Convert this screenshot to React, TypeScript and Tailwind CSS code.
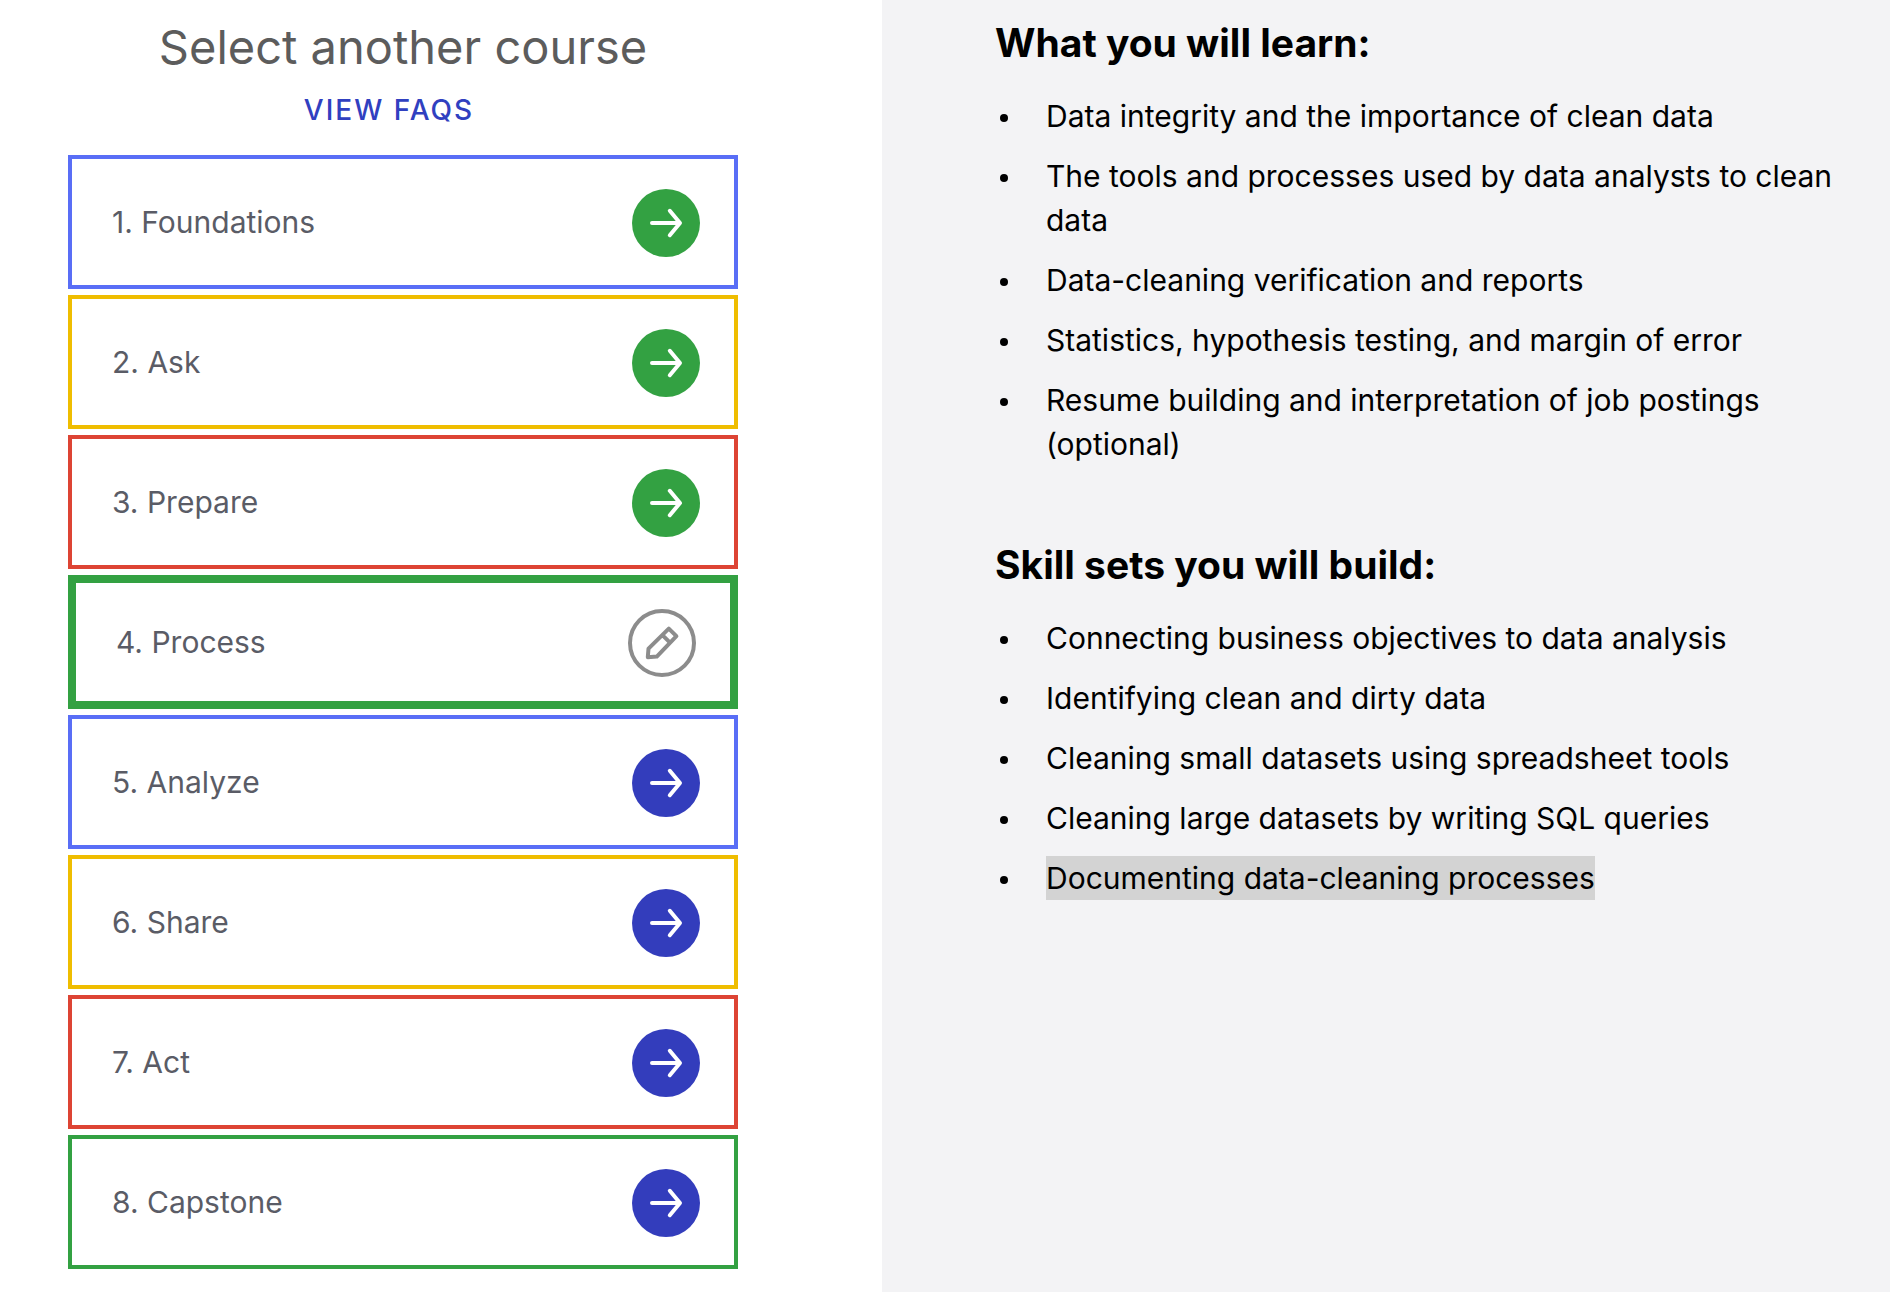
import React from "react";

type Status = "done" | "current" | "upcoming";

type Course = {
  id: string;
  title: string;
  border: string;
  status: Status;
};

const courses: Course[] = [
  { id: "foundations", title: "1. Foundations", border: "border-4 border-[#596ef6]", status: "done" },
  { id: "ask", title: "2. Ask", border: "border-4 border-[#efbd00]", status: "done" },
  { id: "prepare", title: "3. Prepare", border: "border-4 border-[#dd4434]", status: "done" },
  { id: "process", title: "4. Process", border: "border-8 border-[#33a142]", status: "current" },
  { id: "analyze", title: "5. Analyze", border: "border-4 border-[#596ef6]", status: "upcoming" },
  { id: "share", title: "6. Share", border: "border-4 border-[#efbd00]", status: "upcoming" },
  { id: "act", title: "7. Act", border: "border-4 border-[#dd4434]", status: "upcoming" },
  { id: "capstone", title: "8. Capstone", border: "border-4 border-[#33a142]", status: "upcoming" },
];

const learn = [
  "Data integrity and the importance of clean data",
  "The tools and processes used by data analysts to clean data",
  "Data-cleaning verification and reports",
  "Statistics, hypothesis testing, and margin of error",
  "Resume building and interpretation of job postings (optional)",
];

const skills = [
  "Connecting business objectives to data analysis",
  "Identifying clean and dirty data",
  "Cleaning small datasets using spreadsheet tools",
  "Cleaning large datasets by writing SQL queries",
  "Documenting data-cleaning processes",
];

function ArrowBadge({ className }: { className: string }) {
  return (
    <svg viewBox="0 0 68 68" className={`size-[68px] shrink-0 ${className}`} aria-hidden="true">
      <circle cx="34" cy="34" r="34" fill="currentColor" />
      <path
        d="M20 34H47.5M37.8 21.8L48 34L37.8 46.2"
        fill="none"
        stroke="#fff"
        strokeWidth="4"
        strokeLinecap="round"
        strokeLinejoin="round"
      />
    </svg>
  );
}

function PencilBadge() {
  return (
    <svg
      viewBox="0 0 68 68"
      className="size-[68px] shrink-0 text-[#8c8c8c]"
      fill="none"
      stroke="currentColor"
      strokeWidth="4"
      strokeLinejoin="round"
      aria-hidden="true"
    >
      <circle cx="34" cy="34" r="32" />
      <path d="M19.8 48.2L20.5 39.6L40.8 19.6L48.4 27.2L28.8 47.6ZM34.2 25.8L42 33.6" />
    </svg>
  );
}

function CourseCard({ course }: { course: Course }) {
  const current = course.status === "current";
  return (
    <a
      href={`#${course.id}`}
      aria-current={current ? "page" : undefined}
      className={`flex h-[134px] items-center justify-between bg-white pt-0.5 pr-[34px] pl-10 ${course.border}`}
    >
      <span className="pb-0.5 text-[30px] leading-[44px] text-[#5a5c66]">{course.title}</span>
      {current ? (
        <PencilBadge />
      ) : (
        <ArrowBadge className={course.status === "done" ? "text-[#33a142]" : "text-[#333dbc]"} />
      )}
    </a>
  );
}

function Topic({ title, items, selected }: { title: string; items: string[]; selected?: string }) {
  return (
    <section>
      <h2 className="text-[39px] leading-[48px] font-bold">{title}</h2>
      <ul className="mt-[27px] flex flex-col gap-4 pl-[5px]">
        {items.map((item) => (
          <li key={item} className="flex items-start gap-[38px] text-[30px] leading-[44px]">
            <span className="mt-5 size-2 shrink-0 rounded-full bg-black" aria-hidden="true" />
            <span className={item === selected ? "bg-[#d3d3d3]" : ""}>{item}</span>
          </li>
        ))}
      </ul>
    </section>
  );
}

export default function App() {
  return (
    <main className="grid min-h-screen grid-cols-[7fr_8fr] bg-white font-['Inter',sans-serif] text-black">
      <div className="flex flex-col pt-[19px] pr-36 pb-5 pl-[68px]">
        <h1 className="text-center text-[47px] leading-[56px] text-[#5c5c5c]">Select another course</h1>
        <a
          href="#faqs"
          className="mt-[15px] mr-7 self-center text-[28px] leading-10 font-medium tracking-[2px] text-[#3040c0]"
        >
          VIEW FAQS
        </a>
        <nav aria-label="Courses" className="mt-[25px] flex flex-col gap-1.5">
          {courses.map((course) => (
            <CourseCard key={course.id} course={course} />
          ))}
        </nav>
      </div>
      <div className="flex flex-col gap-[75px] bg-[#f3f3f5] pt-[19px] pr-10 pb-10 pl-[113px]">
        <Topic title="What you will learn:" items={learn} />
        <Topic title="Skill sets you will build:" items={skills} selected="Documenting data-cleaning processes" />
      </div>
    </main>
  );
}
